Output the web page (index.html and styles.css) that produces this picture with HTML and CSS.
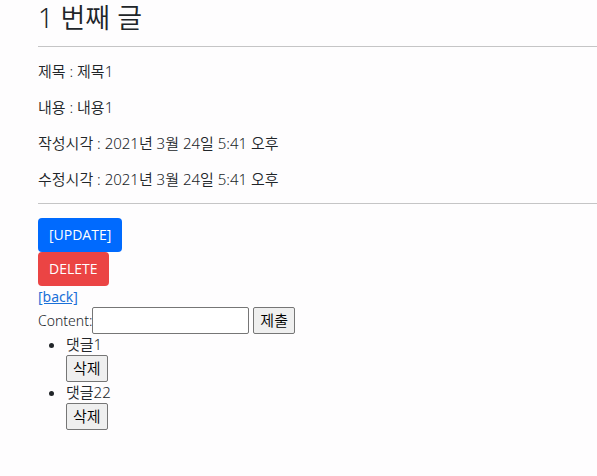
FILE: index.html
```html
<!DOCTYPE html>
<html lang="ko">
<head>
<meta charset="utf-8">
<title>1 번째 글</title>
<link rel="stylesheet" href="styles.css">
</head>
<body>
<main class="page">
  <h1 class="title">1 번째 글</h1>
  <hr class="rule">
  <section class="fields">
    <p class="field">제목 : 제목1</p>
    <p class="field">내용 : 내용1</p>
    <p class="field">작성시각 : 2021년 3월 24일 5:41 오후</p>
    <p class="field">수정시각 : 2021년 3월 24일 5:41 오후</p>
  </section>
  <hr class="rule">
  <a class="btn btn-primary" href="#update">[UPDATE]</a>
  <form><button class="btn btn-danger" type="button">DELETE</button></form>
  <a class="back" href="#back">[back]</a>
  <form class="comment-form">
    <label for="content">Content:</label><input class="text-input" id="content" type="text">
    <button class="plain" type="button">제출</button>
  </form>
  <ul class="comments">
    <li>댓글1<form><button class="plain" type="button">삭제</button></form></li>
    <li>댓글22<form><button class="plain" type="button">삭제</button></form></li>
  </ul>
</main>
</body>
</html>
```

FILE: styles.css
```css
* { box-sizing: border-box; }
body {
  margin: 0;
  background: #fefdfe;
  color: #212529;
  font: 350 14px/21px "Noto Sans", "Noto Sans CJK KR", sans-serif;
}
.page {
  display: flex;
  flex-direction: column;
  align-items: flex-start;
  padding-left: 38px;
}
.title { margin: 0 0 10px; font-size: 27px; font-weight: 350; line-height: 36px; }
.rule { width: 100%; height: 1px; margin: 0 0 14px; border: 0; background: #c5c5c6; }
.fields { display: grid; gap: 16px; margin-bottom: 14px; font-size: 15px; line-height: 20px; }
.field { margin: 0; }
.btn {
  display: block;
  padding: 6px 10px;
  border: 1px solid transparent;
  border-radius: 4px;
  color: #fff;
  font: inherit;
  font-family: "Open Sans", sans-serif;
  font-weight: 400;
  line-height: 20px;
  text-decoration: none;
}
.btn-primary { background: #006afe; }
.btn-danger { background: #eb4444; }
.back { color: #1a70d8; font-weight: 400; }
.comment-form { display: flex; align-items: center; }
.text-input { width: 157px; height: 27px; margin-right: 4px; border: 1px solid #767676; border-radius: 2px; background: #fff; font: inherit; }
.plain {
  display: block;
  height: 27px;
  padding: 0 6px;
  border: 1px solid #767676;
  border-radius: 2px;
  background: #efefef;
  color: #000;
  font: inherit;
  font-size: 15px;
}
.comments { margin: 0; padding-left: 28px; font-size: 15px; }
```
